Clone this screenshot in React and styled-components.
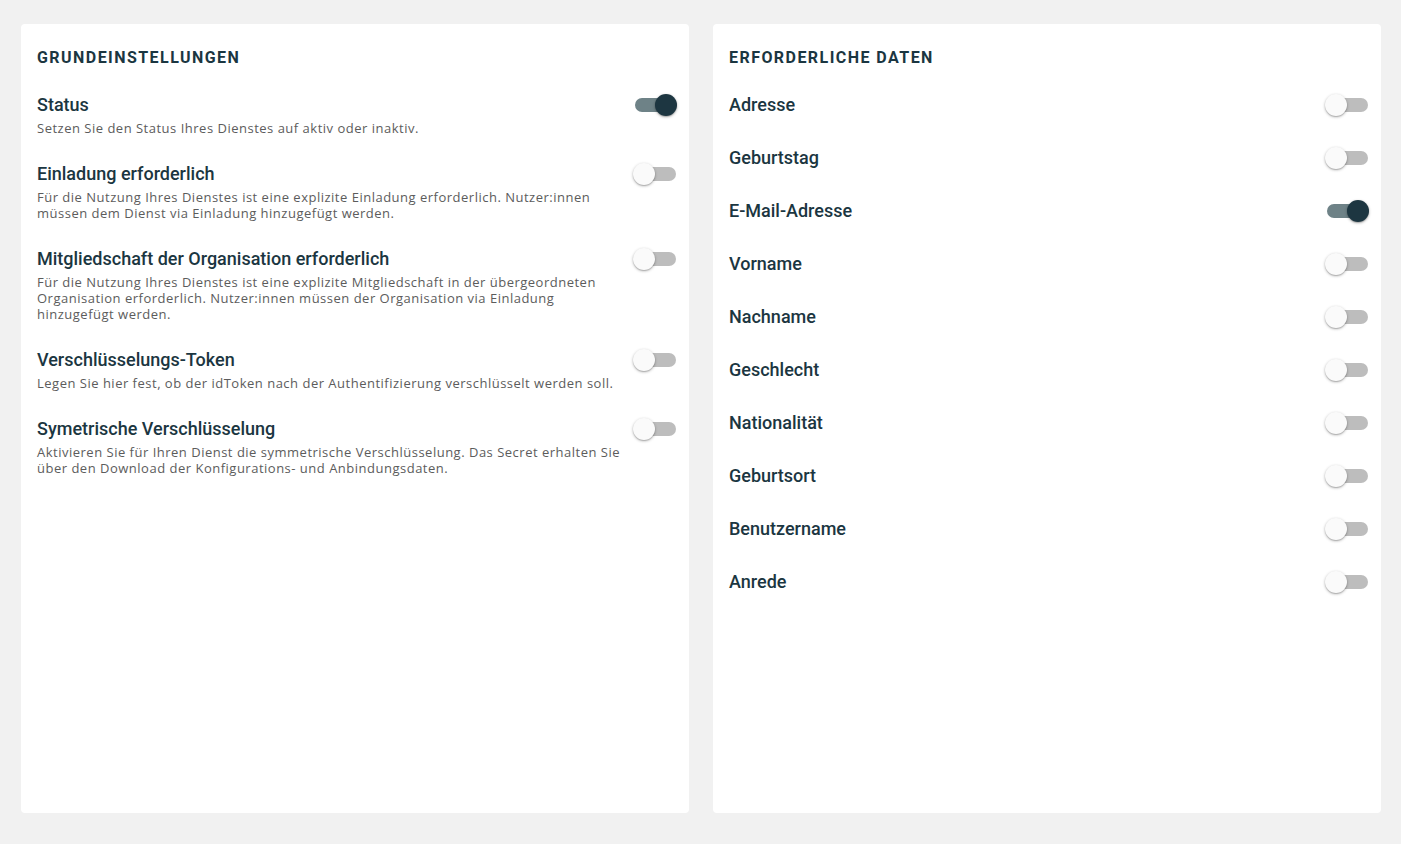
import React from "react";
import styled, { createGlobalStyle } from "styled-components";

const Global = createGlobalStyle`
  html, body { margin: 0; padding: 0; background: #f1f1f1; }
  body { font-family: Roboto, "Noto Sans", sans-serif; }
  * { box-sizing: border-box; }
`;

const Page = styled.div`
  display: grid;
  grid-template-columns: 668px 668px;
  gap: 24px;
  padding: 24px 20px 31px 21px;
  min-height: 844px;
`;

const Card = styled.section`
  background: #fff;
  border-radius: 4px;
  padding: 24px 11px 16px 16px;
  height: 789px;
`;

const Heading = styled.h2`
  margin: 0 0 25px;
  font-size: 16px;
  line-height: 20px;
  font-weight: 700;
  color: #1b3641;
  text-transform: uppercase;
  letter-spacing: 1.45px;
`;

const List = styled.div`
  display: flex;
  flex-direction: column;
  gap: ${(p) => p.$gap}px;
`;

const Row = styled.div`
  display: flex;
  align-items: flex-start;
  justify-content: space-between;
  gap: 12px;
`;

const Text = styled.div`
  flex: 1;
  max-width: 586px;
`;

const Title = styled.div`
  font-size: 18px;
  line-height: 24px;
  font-weight: 500;
  color: #1b3641;
`;

const Desc = styled.div`
  margin-top: 3px;
  font-family: "Open Sans", Roboto, sans-serif;
  font-size: 13px;
  line-height: 16px;
  letter-spacing: 0.5px;
  color: #5c5c5c;
`;

const SwitchBox = styled.div`
  position: relative;
  width: 44px;
  height: 24px;
  flex: none;
`;

const Track = styled.div`
  position: absolute;
  left: 1px;
  right: 2px;
  top: 5px;
  height: 14px;
  border-radius: 7px;
  background: ${(p) => (p.$on ? "#6e8287" : "#bdbdbd")};
`;

const Thumb = styled.div`
  position: absolute;
  top: 1px;
  left: ${(p) => (p.$on ? "21px" : "-1px")};
  width: 22px;
  height: 22px;
  border-radius: 50%;
  background: ${(p) => (p.$on ? "#1d3641" : "#fafafa")};
  box-shadow: 0 1px 3px rgba(0, 0, 0, 0.3), 0 1px 1px rgba(0, 0, 0, 0.14);
`;

const Switch = ({ on }) => (
  <SwitchBox role="switch" aria-checked={on}>
    <Track $on={on} />
    <Thumb $on={on} />
  </SwitchBox>
);

const basic = [
  { t: "Status", d: "Setzen Sie den Status Ihres Dienstes auf aktiv oder inaktiv.", on: true },
  {
    t: "Einladung erforderlich",
    d: "Für die Nutzung Ihres Dienstes ist eine explizite Einladung erforderlich. Nutzer:innen müssen dem Dienst via Einladung hinzugefügt werden.",
  },
  {
    t: "Mitgliedschaft der Organisation erforderlich",
    d: "Für die Nutzung Ihres Dienstes ist eine explizite Mitgliedschaft in der übergeordneten Organisation erforderlich. Nutzer:innen müssen der Organisation via Einladung hinzugefügt werden.",
  },
  {
    t: "Verschlüsselungs-Token",
    d: "Legen Sie hier fest, ob der idToken nach der Authentifizierung verschlüsselt werden soll.",
  },
  {
    t: "Symetrische Verschlüsselung",
    d: "Aktivieren Sie für Ihren Dienst die symmetrische Verschlüsselung. Das Secret erhalten Sie über den Download der Konfigurations- und Anbindungsdaten.",
  },
];

const data = [
  "Adresse",
  "Geburtstag",
  "E-Mail-Adresse",
  "Vorname",
  "Nachname",
  "Geschlecht",
  "Nationalität",
  "Geburtsort",
  "Benutzername",
  "Anrede",
];

export default function App() {
  return (
    <>
      <Global />
      <Page>
        <Card>
          <Heading>Grundeinstellungen</Heading>
          <List $gap={26}>
            {basic.map((r) => (
              <Row key={r.t}>
                <Text>
                  <Title>{r.t}</Title>
                  <Desc>{r.d}</Desc>
                </Text>
                <Switch on={!!r.on} />
              </Row>
            ))}
          </List>
        </Card>
        <Card>
          <Heading>Erforderliche Daten</Heading>
          <List $gap={29}>
            {data.map((t) => (
              <Row key={t}>
                <Title>{t}</Title>
                <Switch on={t === "E-Mail-Adresse"} />
              </Row>
            ))}
          </List>
        </Card>
      </Page>
    </>
  );
}
